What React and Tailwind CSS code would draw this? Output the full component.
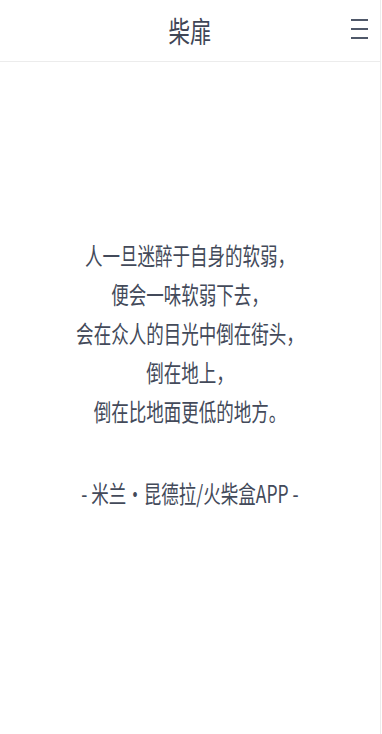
import React from 'react';

const lines = [
  '人一旦迷醉于自身的软弱，',
  '便会一味软弱下去，',
  '会在众人的目光中倒在街头，',
  '倒在地上，',
  '倒在比地面更低的地方。',
];

export default function App() {
  return (
    <div className="min-h-[734px] w-[382px] bg-white font-['Noto_Sans_CJK_SC',sans-serif] text-[#434a5a]">
      <div className="min-h-[734px] w-[381px] border-r border-[#ececec]">
        {/* 顶栏 */}
        <header className="relative flex h-[62px] items-center justify-center border-b border-[#ececec]">
          <span className="inline-block scale-x-[0.74] text-[29px] leading-none text-[#3f4656]">柴扉</span>
          <div className="absolute right-[12px] top-[19px] flex w-[17px] flex-col gap-[7px]">
            <div className="h-[2px] w-full bg-[#4f5869]"></div>
            <div className="h-[2px] w-full bg-[#4f5869]"></div>
            <div className="h-[2px] w-full bg-[#4f5869]"></div>
          </div>
        </header>

        {/* 正文 */}
        <main className="flex flex-col items-center pt-[173px] text-center">
          {lines.map((l, i) => (
            <p key={i} className="h-[39px] whitespace-nowrap text-[24px] leading-[39px]">
              <span className="inline-block scale-x-[0.73]">{l}</span>
            </p>
          ))}
          <p className="mt-[43px] h-[39px] whitespace-nowrap text-[24px] leading-[39px]">
            <span className="inline-block scale-x-[0.73]">- 米兰·昆德拉/火柴盒APP -</span>
          </p>
        </main>
      </div>
    </div>
  );
}
